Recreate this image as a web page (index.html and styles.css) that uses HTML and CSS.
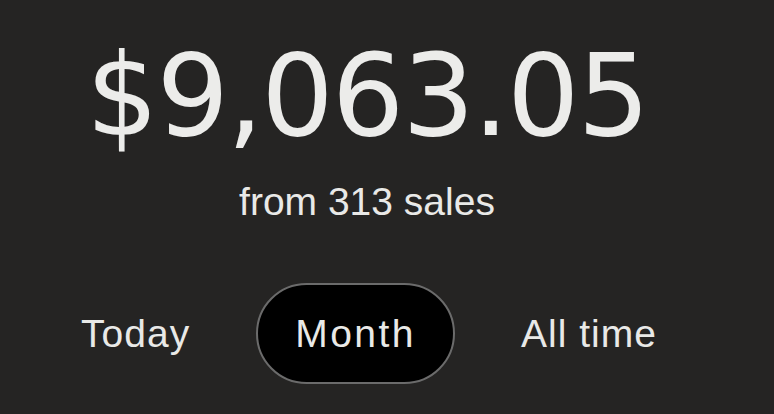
FILE: index.html
```html
<!DOCTYPE html>
<html lang="en">
<head>
<meta charset="utf-8">
<title>Sales</title>
<link rel="stylesheet" href="styles.css">
</head>
<body>
<main class="summary">
  <div class="amount">$9,063.05</div>
  <div class="sales">from 313 sales</div>
  <nav class="tabs">
    <span class="tab">Today</span>
    <span class="tab tab-active">Month</span>
    <span class="tab">All time</span>
  </nav>
</main>
</body>
</html>
```

FILE: styles.css
```css
html, body {
  margin: 0;
  padding: 0;
  background: #252423;
  height: 100%;
}

body {
  font-family: "Liberation Sans", Arial, sans-serif;
  color: #e9e9e7;
  overflow: hidden;
}

.summary {
  display: flex;
  flex-direction: column;
  align-items: center;
  padding: 38px 40px 0 0;
}

.amount {
  font-family: "DejaVu Sans", "Liberation Sans", sans-serif;
  font-size: 114px;
  font-weight: 400;
  line-height: 1;
  letter-spacing: -2px;
  margin-top: 1px;
  margin-bottom: 1px;
  color: #ececea;
}

.sales {
  margin-top: 28px;
  font-size: 39px;
  line-height: 1;
}

.tabs {
  margin-top: 62px;
  margin-left: 4px;
  display: flex;
  gap: 27px;
}

.tab {
  font-size: 39px;
  line-height: 1;
  letter-spacing: 1px;
  padding: 29px 37px 29px 37px;
  border: 2px solid transparent;
  border-radius: 60px;
}

.tab-active {
  letter-spacing: 2.5px;
  background: #000;
  border-color: #6b6b6b;
}
```
